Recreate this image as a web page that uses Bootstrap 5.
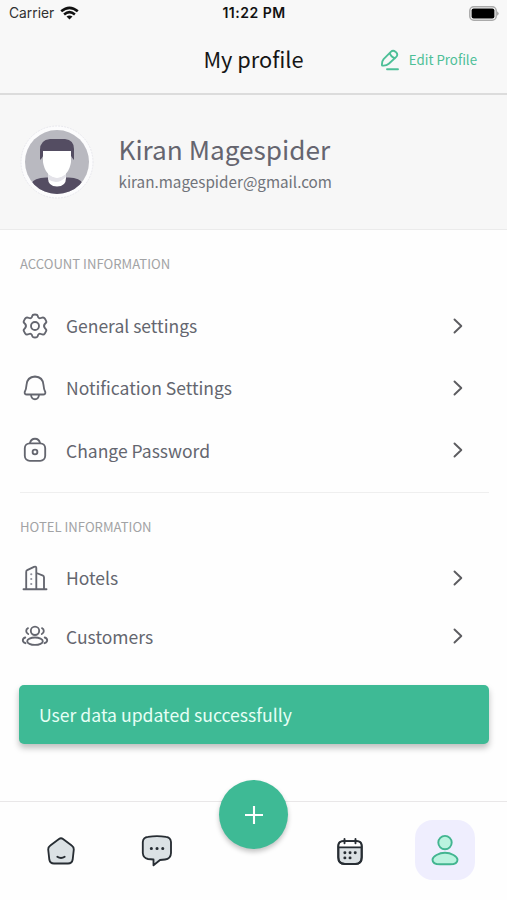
<!DOCTYPE html>
<html lang="en">
<head>
<meta charset="utf-8">
<meta name="viewport" content="width=device-width, initial-scale=1">
<title>My profile</title>
<link rel="stylesheet" href="https://cdn.jsdelivr.net/npm/bootstrap@5.3.0/dist/css/bootstrap.min.css">
<style>
body{font-family:"Noto Sans CJK SC","Noto Sans",sans-serif;color:#60626c;line-height:1.2;background:#fefefe}
svg{display:block;flex:none;fill:none;stroke:currentColor;stroke-width:1.85;stroke-linecap:round;stroke-linejoin:round}
.screen{width:507px;height:900px;overflow:hidden}
.status{height:27px;padding:0 8px 0 9px;font-family:Inter,sans-serif;font-size:13.8px;color:#303030}
.side{flex:1 1 0}
.carrier{gap:6px}
.wifi{stroke:#111;stroke-width:2.6;stroke-linecap:butt}
.solid{stroke:none}
.clock{font-weight:600;font-size:14px;letter-spacing:.5px;color:#111}
.titlebar{height:68px;padding:0 30px;border-bottom:2px solid #dcdcdc}
.title{font-size:21.8px;color:#161616;margin-top:-2px}
.edit{font-size:13.3px;color:#4dbf97;gap:9px;margin-top:-1px}
.bar-bg{background:#f8f8f8}
.person{height:135px;padding:0 20px;border-bottom:1px solid #ebebeb;background:#f7f7f7;gap:24.5px}
.person-name{font-size:26.2px;line-height:32px;color:#65656f}
.person-mail{font-size:15.25px;line-height:22px;margin-top:5px;color:#70737a}
.lists{padding:26px 18px 0 20px}
.section-label{font-size:13.1px;line-height:16px;color:#a2a3a5}
.item{height:62.3px;font-size:17.5px;color:#64666f;padding:0 26px 0 1px}
.item-short{height:58.5px}
.glyph{width:28px;margin-right:17px}
.chev{width:10px;height:16px;color:#5c5c60;stroke-width:1.9}
.rule{border-top:1px solid #efefef;margin-top:10.5px}
.notice{height:58.5px;margin:20px 18.5px 0 19px;padding:0 20px;border-radius:5px;background:#3eba95;color:#e6fff5;font-size:17.6px;box-shadow:0 4px 6px rgba(0,0,0,.25)}
.tabs{height:99px;border-top:1px solid #e9e7e8;padding:0 13px}
.tab{flex:1 1 0;height:98px;color:#272d33}
.fab{width:69px;height:69px;margin-top:-73px;background:#3eba95;color:#fff;box-shadow:0 3px 5px rgba(0,0,0,.23)}
.active-tab{width:60px;height:60px;margin:-2px 2px 0 0;border-radius:18px;background:#efeefe;color:#42b590}
.person-tab{fill:#baf3df;stroke-width:1.9}
</style>
</head>
<body>
<div class="screen d-flex flex-column">
  <header class="bar-bg">
    <div class="status d-flex align-items-center">
      <div class="side carrier d-flex align-items-center"><span>Carrier</span>
        <svg class="wifi" width="19" height="14" viewBox="0 0 19 14"><path d="M1.2 5.3Q9.5-1.7 17.8 5.3M4.1 8.4Q9.5 4 14.9 8.4"/><path d="M6.5 10.5Q9.5 8.6 12.5 10.5L9.5 13.6Z" fill="#111" stroke="none"/></svg></div>
      <div class="clock">11:22 PM</div>
      <div class="side d-flex justify-content-end">
        <svg class="solid" width="30" height="15" viewBox="0 0 30 15"><rect x=".8" y=".8" width="26.4" height="13.4" rx="4" fill="#f8f8f8" stroke="#aaa" stroke-width="1.5"/><rect x="2.6" y="2.6" width="22.8" height="9.8" rx="2" fill="#000"/><path d="M28.2 5.2Q31 7.5 28.2 9.8Z" fill="#999"/></svg></div>
    </div>
    <div class="titlebar d-flex align-items-center">
      <div class="side"></div>
      <div class="title">My profile</div>
      <div class="side edit d-flex align-items-center justify-content-end">
        <svg width="20" height="22" viewBox="0 0 20 22"><path d="M2 16.5Q1.6 12.5 3.6 10.2L10.8 2.9Q13 .7 15.4 2.7L16.4 3.7Q18.3 6 16 8.2L8.8 14.8Q6.3 17 2 16.5ZM9.8 4Q10.8 8 15 9.2M7 20.2H18"/></svg>
        <span>Edit Profile</span>
      </div>
    </div>
  </header>

  <section class="person d-flex align-items-center">
    <svg class="solid" width="74" height="74" viewBox="0 0 74 74">
      <defs><clipPath id="face"><circle cx="37" cy="37" r="32"/></clipPath></defs>
      <circle cx="37" cy="37" r="36" fill="#fcfcfd" stroke="#e8e8ee" stroke-width="1" stroke-dasharray="1 2"/>
      <g clip-path="url(#face)"><rect width="74" height="74" fill="#b9b9c0"/>
        <path d="M11 74V59Q14 52 28 52.5H47Q60 52 63 59V74Z" fill="#544d62"/>
        <path d="M20 35V25Q20 15 30 14H45Q54 15 54 24V35Q50 31 50 26H24Q24 32 20 35Z" fill="#544d62"/>
        <path d="M28 44H46V53Q46 61.5 37 61.5Q28 61.5 28 53Z" fill="#fff"/>
        <path d="M28 49Q37 56 46 49V52Q37 61 28 54Z" fill="#e4e3e9"/>
        <path d="M23 26H51V37Q49 51 37 53Q25 51 23 37Z" fill="#fff"/></g>
    </svg>
    <div><div class="person-name">Kiran Magespider</div><div class="person-mail">kiran.magespider@gmail.com</div></div>
  </section>

  <main class="lists">
    <div class="section-label" style="margin-bottom:22.5px">ACCOUNT INFORMATION</div>
    <div class="item d-flex align-items-center"><div class="glyph d-flex justify-content-center">
      <svg width="28" height="28" viewBox="0 0 28 28"><circle cx="14" cy="14" r="4"/><path d="M11.2 4.2Q11.5 2.5 14 2.5T16.8 4.2Q17.3 7 20 6Q22.7 4.7 23.8 6.5L25 8.6Q26 10.3 24.2 11.5Q21.8 14 24.2 16.5Q26 17.7 25 19.4L23.8 21.5Q22.7 23.3 20 22Q17.3 21 16.8 23.8Q16.5 25.5 14 25.5T11.2 23.8Q10.7 21 8 22Q5.3 23.3 4.2 21.5L3 19.4Q2 17.7 3.8 16.5Q6.2 14 3.8 11.5Q2 10.3 3 8.6L4.2 6.5Q5.3 4.7 8 6Q10.7 7 11.2 4.2Z"/></svg></div>
      <span>General settings</span><svg class="chev ms-auto" viewBox="0 0 10 16"><path d="M1.5 1.5L8.3 8L1.5 14.5"/></svg></div>
    <div class="item d-flex align-items-center"><div class="glyph d-flex justify-content-center">
      <svg width="28" height="28" viewBox="0 0 28 28"><path d="M5.8 20.5Q3.3 20.5 3.7 18Q5.2 15.5 5.5 11Q6 3 14 2.5Q22 3 22.5 11Q22.8 15.5 24.3 18Q24.7 20.5 22.2 20.5ZM10 21Q10.5 25.2 14 25.2T18 21"/></svg></div>
      <span>Notification Settings</span><svg class="chev ms-auto" viewBox="0 0 10 16"><path d="M1.5 1.5L8.3 8L1.5 14.5"/></svg></div>
    <div class="item d-flex align-items-center"><div class="glyph d-flex justify-content-center">
      <svg width="28" height="28" viewBox="0 0 28 28"><rect x="3.8" y="7.3" width="20.4" height="17.5" rx="5"/><path d="M9 7Q10 2.7 14 2.7T19 7"/><circle cx="14" cy="16" r="2.4"/></svg></div>
      <span>Change Password</span><svg class="chev ms-auto" viewBox="0 0 10 16"><path d="M1.5 1.5L8.3 8L1.5 14.5"/></svg></div>
    <div class="rule"></div>
    <div class="section-label" style="margin:26px 0 13.5px">HOTEL INFORMATION</div>
    <div class="item item-short d-flex align-items-center"><div class="glyph d-flex justify-content-center">
      <svg width="28" height="28" viewBox="0 0 28 28"><path d="M2.5 25.2H25.5M5.2 25V8Q5 6.8 6.2 6.2L13 2.8Q15.3 2 15.3 4V25M15.5 9L22 11.6Q23 12 23 13.5V25"/><path d="M10.2 10.2h.1M10.2 15h.1M10.2 20h.1" style="stroke-width:2.1" stroke="#92949f"/></svg></div>
      <span>Hotels</span><svg class="chev ms-auto" viewBox="0 0 10 16"><path d="M1.5 1.5L8.3 8L1.5 14.5"/></svg></div>
    <div class="item item-short d-flex align-items-center"><div class="glyph d-flex justify-content-center">
      <svg width="28" height="28" viewBox="0 0 28 28"><circle cx="14" cy="8.8" r="4.2"/><ellipse cx="14" cy="19.2" rx="7.8" ry="3.7"/><path d="M7 6.2Q5.2 7 5.2 9T7.2 12M21 6.2Q22.8 7 22.8 9T20.8 12M4.3 15.5Q1.8 16.3 1.8 18.3T4.5 21.2M23.7 15.5Q26.2 16.3 26.2 18.3T23.5 21.2"/></svg></div>
      <span>Customers</span><svg class="chev ms-auto" viewBox="0 0 10 16"><path d="M1.5 1.5L8.3 8L1.5 14.5"/></svg></div>
  </main>

  <div class="notice d-flex align-items-center" role="alert">User data updated successfully</div>

  <nav class="tabs d-flex align-items-center mt-auto">
    <div class="tab d-flex align-items-center justify-content-center"><svg width="30" height="30" viewBox="0 0 30 30"><path d="M13 3Q15 1.5 17 3L25.7 9.4Q28 11 27.8 13.5L26.7 23.5Q26 27.5 22 27.5H8Q4 27.5 3.3 23.5L2.2 13.5Q2 11 4.3 9.4Z" fill="#dbe1e4"/><path d="M11.3 20.7Q15 23.3 18.7 20.7"/></svg></div>
    <div class="tab d-flex align-items-center justify-content-center"><svg width="32" height="32" viewBox="0 0 32 32"><path d="M7 1.8Q16 .5 25 1.8Q29.5 2.3 30 7V18Q29.8 23.8 24 24.5L19 25L12.5 30.3V24.5L7 24Q2.2 23 1.8 18V7Q2.2 2.3 7 1.8Z" fill="#dbe1e4"/><path d="M10.3 13.6h.1M16 13.6h.1M21.7 13.6h.1" style="stroke-width:3"/></svg></div>
    <div class="tab d-flex align-items-center justify-content-center"><div class="fab rounded-circle d-flex align-items-center justify-content-center"><svg width="20" height="20" viewBox="0 0 20 20" style="stroke-width:2.1;stroke-linecap:butt"><path d="M10 1V19M1 10H19"/></svg></div></div>
    <div class="tab d-flex align-items-center justify-content-center"><svg width="30" height="29" viewBox="0 0 28 28"><path d="M7.5 4H20.5Q25.3 4 25.3 9V19.5Q25.3 26 19 26H9Q2.7 26 2.7 19.5V9Q2.7 4 7.5 4Z" fill="#dbe1e4"/><path d="M3.4 9.3V8Q3.8 4.8 7.5 4.8H20.5Q24.2 4.8 24.6 8V9.3Z" fill="#fff" stroke="none"/><path d="M7.5 4H20.5Q25.3 4 25.3 9V19.5Q25.3 26 19 26H9Q2.7 26 2.7 19.5V9Q2.7 4 7.5 4ZM3 10H25M8.7 2V6M19.3 2V6"/><path d="M9 15.2h.1M14 15.2h.1M19 15.2h.1M9 20.2h.1M14 20.2h.1" style="stroke-width:2.8"/></svg></div>
    <div class="tab d-flex align-items-center justify-content-center"><div class="active-tab d-flex align-items-center justify-content-center"><svg class="person-tab" width="30" height="32" viewBox="0 0 30 32"><circle cx="15" cy="8.6" r="6.7"/><path d="M15 18.7C21 18.7 27.5 22.5 27.5 25.7C27.5 29 24 30.3 20 30.3H10C6 30.3 2.5 29 2.5 25.7C2.5 22.5 9 18.7 15 18.7Z"/></svg></div></div>
  </nav>
</div>
<script src="https://cdn.jsdelivr.net/npm/bootstrap@5.3.0/dist/js/bootstrap.bundle.min.js"></script>
</body>
</html>
